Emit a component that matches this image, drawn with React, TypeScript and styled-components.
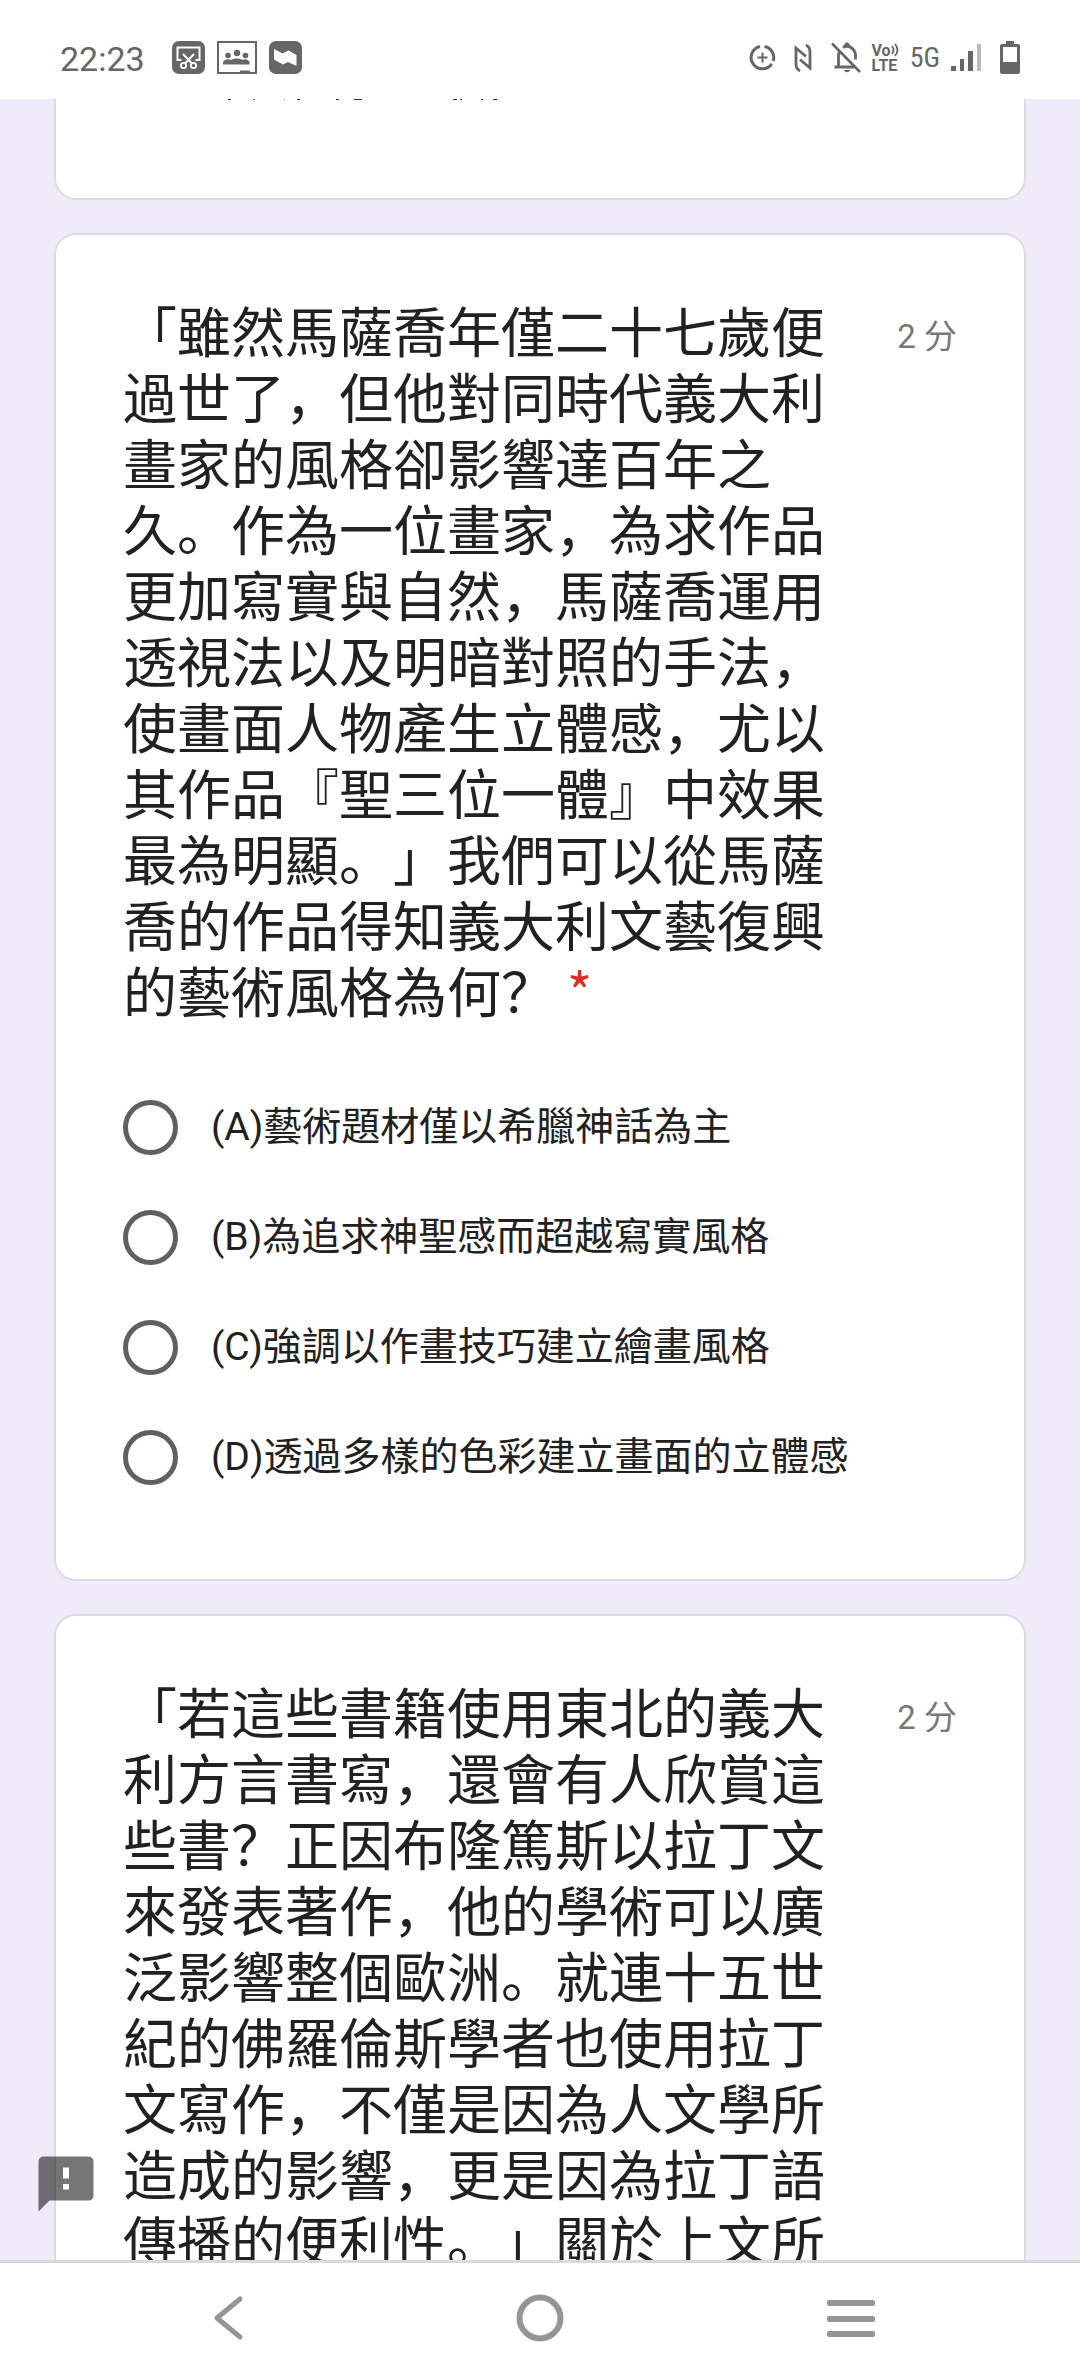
import React from "react";
import styled, { createGlobalStyle } from "styled-components";

const GlobalStyle = createGlobalStyle`
  * { box-sizing: border-box; }
  html, body, #root { height: 100%; }
  body {
    margin: 0;
    background: #f0ebf8;
    color: #212121;
    font-family: Roboto, "Noto Sans CJK SC", sans-serif;
    text-spacing-trim: space-all;
  }
`;

const Screen = styled.div`
  display: flex;
  flex-direction: column;
  height: 100vh;
  overflow: hidden;
`;

const StatusBar = styled.header`
  flex: none;
  display: flex;
  align-items: center;
  height: 99px;
  padding: 16px 60px 0;
  background: #fff;
  color: #666;
`;

const Clock = styled.time`
  margin-right: 27px;
  padding-top: 2px;
  font-size: 34px;
  line-height: 40px;
`;

const IconGroup = styled.div<{ $gap: number; $end?: boolean }>`
  display: flex;
  align-items: center;
  gap: ${(p) => p.$gap}px;
  margin-left: ${(p) => (p.$end ? "auto" : "0")};
`;

const Network = styled.span`
  font-family: "Roboto Condensed", Roboto, sans-serif;
  font-size: 28px;
  line-height: 34px;
`;

const Viewport = styled.main`
  flex: 1;
  min-height: 0;
  overflow: hidden;
  display: flex;
  flex-direction: column;
  gap: 33px;
  padding: 0 54px;
  background: #f0ebf8;
`;

const Card = styled.section`
  flex: none;
  padding: 64px 67px 67px;
  background: #fff;
  border: 2px solid #dadce0;
  border-radius: 22px;
`;

const ScrolledCard = styled(Card)`
  height: 101px;
  padding-top: 0;
  border-top: 0;
  border-top-left-radius: 0;
  border-top-right-radius: 0;
  svg { display: block; }
`;

const Heading = styled.div`
  display: flex;
  justify-content: space-between;
  margin-bottom: 44px;
`;

const Question = styled.h2`
  flex: 1;
  max-width: 720px;
  margin: 0;
  padding-top: 3px;
  font-size: 54px;
  font-weight: 400;
  line-height: 66px;
`;

const Required = styled.span`
  padding-left: 12px;
  color: #d93025;
  font-family: "Noto Sans CJK SC", sans-serif;
  line-height: 1;
`;

const Points = styled.span`
  flex: none;
  padding-top: 16px;
  color: #777;
  font-size: 33px;
  line-height: 44px;
`;

const Options = styled.div`
  display: flex;
  flex-direction: column;
`;

const Option = styled.label`
  display: flex;
  align-items: center;
  gap: 33px;
  min-height: 110px;
  font-size: 39px;
  line-height: 55px;
`;

const Radio = styled.input`
  appearance: none;
  flex: none;
  width: 55px;
  height: 55px;
  margin: 0;
  border: 5px solid #5f6065;
  border-radius: 50%;
  background: #fff;
  &:checked { border-width: 16px; }
`;

const Report = styled.button`
  position: fixed;
  left: 33px;
  bottom: 159px;
  width: 66px;
  height: 66px;
  padding: 0;
  border: 0;
  background: none;
  svg { display: block; }
`;

const NavBar = styled.nav`
  flex: none;
  display: grid;
  grid-template-columns: repeat(3, 1fr);
  align-items: center;
  height: 116px;
  padding: 0 74px 3px;
  border-top: 3px solid #dadade;
  background: #fff;
`;

const NavButton = styled.button`
  display: flex;
  justify-content: center;
  padding: 0;
  border: 0;
  background: none;
  color: #959595;
`;

const questions = [
  {
    id: "q1",
    text: "「雖然馬薩喬年僅二十七歲便過世了，但他對同時代義大利畫家的風格卻影響達百年之久。作為一位畫家，為求作品更加寫實與自然，馬薩喬運用透視法以及明暗對照的手法，使畫面人物產生立體感，尤以其作品『聖三位一體』中效果最為明顯。」我們可以從馬薩喬的作品得知義大利文藝復興的藝術風格為何？",
    options: [
      "(A)藝術題材僅以希臘神話為主",
      "(B)為追求神聖感而超越寫實風格",
      "(C)強調以作畫技巧建立繪畫風格",
      "(D)透過多樣的色彩建立畫面的立體感",
    ],
  },
  {
    id: "q2",
    text: "「若這些書籍使用東北的義大利方言書寫，還會有人欣賞這些書？正因布隆篤斯以拉丁文來發表著作，他的學術可以廣泛影響整個歐洲。就連十五世紀的佛羅倫斯學者也使用拉丁文寫作，不僅是因為人文學所造成的影響，更是因為拉丁語傳播的便利性。」關於上文所",
    options: [],
  },
];

// Stroke ends left visible under the status bar by the previous question.
function ScrolledEdge() {
  return (
    <svg width="400" height="2" viewBox="0 0 400 2" fill="#333" aria-hidden="true">
      <rect x="105" width="3" height="1" />
      <rect x="130" width="2" height="1" opacity="0.6" />
      <rect x="161" width="1" height="1" opacity="0.6" />
      <rect x="174" width="3" height="1" />
      <rect x="213" width="3" height="1" />
      <rect x="231" width="8" height="1" />
      <rect x="330" width="4" height="1" />
      <rect x="337" width="2" height="1" />
      <rect x="358" width="2" height="1" />
      <rect x="370" width="4" height="1" />
    </svg>
  );
}

function ScreenshotIcon() {
  return (
    <svg width="33" height="33" viewBox="0 0 33 33" fill="none" aria-hidden="true">
      <rect width="33" height="33" rx="7" fill="#666" />
      <path d="M9.500 19H5.500V6.500H27.500V19H23.500M11 13L20 22.500M22 13L13 22.500" stroke="#fff" strokeWidth="2" />
      <circle cx="11.500" cy="24.500" r="2.600" stroke="#fff" strokeWidth="1.800" />
      <circle cx="21.500" cy="24.500" r="2.600" stroke="#fff" strokeWidth="1.800" />
    </svg>
  );
}

function ClassroomIcon() {
  return (
    <svg width="40" height="33" viewBox="0 0 40 33" aria-hidden="true">
      <rect x="1" y="1" width="38" height="31" fill="none" stroke="#666" strokeWidth="2" />
      <g fill="#666">
        <circle cx="20" cy="12" r="3.200" />
        <circle cx="11" cy="14.500" r="2.800" />
        <circle cx="28.500" cy="14.500" r="2.800" />
        <path d="M6 23.500V21.500C7 18.500 12 17.500 14 19C17 17 23 17 25.500 19C28 17.500 32 18.500 32.500 21.500V23.500Z" />
        <rect x="23" y="29.500" width="10" height="2" />
      </g>
    </svg>
  );
}

function WaveIcon() {
  return (
    <svg width="33" height="33" viewBox="0 0 33 33" aria-hidden="true">
      <rect width="33" height="33" rx="7" fill="#666" />
      <path d="M5 8L13.500 12.500L19.500 9.500L27.500 14V25L19 21L14 23.500L5 18.500Z" fill="#fff" />
    </svg>
  );
}

function DataSaverIcon() {
  return (
    <svg width="27" height="27" viewBox="0 0 27 27" fill="none" stroke="#666" aria-hidden="true">
      <path d="M11 2.500A11.300 11.300 0 1 0 22.800 19.800M24.200 17A11.300 11.300 0 0 0 15.500 2.500" strokeWidth="3" />
      <path d="M13.500 8.500V18.500M8.500 13.500H18.500" strokeWidth="2" />
    </svg>
  );
}

function NfcIcon() {
  return (
    <svg width="33" height="28" viewBox="-7 0 33 28" fill="none" stroke="#666" strokeWidth="2.800" aria-hidden="true">
      <path d="M6 27Q2 25 2 20V4L12 12.500M12 1Q16 3 16 8V24L6 15.500" />
    </svg>
  );
}

function BellOffIcon() {
  return (
    <svg width="30" height="31" viewBox="0 0 30 31" fill="none" stroke="#666" aria-hidden="true">
      <path d="M7.500 25V13.500Q7.500 11 9 8.500M12 5.500Q16 3 20 5.500Q24.500 8.500 24.500 13.500V17.500M3.500 25H23" strokeWidth="2.800" />
      <path d="M13.500 3Q16 -1.500 18.500 3Z" fill="#666" />
      <path d="M12.500 28H19.500Q16 32.500 12.500 28Z" fill="#666" stroke="none" />
      <path d="M1 1.500L29 30" strokeWidth="2.600" />
    </svg>
  );
}

const VolteBox = styled.span`
  display: grid;
  font-size: 16px;
  font-weight: 700;
  line-height: 15px;
`;

const VolteTop = styled.span`
  display: flex;
  align-items: center;
`;

function Volte() {
  return (
    <VolteBox>
      <VolteTop>
        Vo
        <svg width="8" height="14" viewBox="0 0 8 14" fill="none" stroke="#666" strokeWidth="1.800" aria-hidden="true">
          <path d="M1 3Q4 7 1 11M4 1Q9 7 4 13" />
        </svg>
      </VolteTop>
      <span>LTE</span>
    </VolteBox>
  );
}

function SignalIcon() {
  return (
    <svg width="30" height="27" viewBox="0 0 30 27" fill="#666" aria-hidden="true">
      <rect x="0" y="22" width="5" height="5" />
      <rect x="9" y="15" width="4" height="12" />
      <rect x="17" y="7" width="5" height="20" />
      <rect x="26" y="0" width="4" height="27" fill="#bbb" />
    </svg>
  );
}

function BatteryIcon() {
  return (
    <svg width="28" height="33" viewBox="-8 0 28 33" aria-hidden="true">
      <path d="M6 0H14V3H18Q20 3 20 5V31Q20 33 18 33H2Q0 33 0 31V5Q0 3 2 3H6Z" fill="#666" />
      <rect x="3" y="6" width="14" height="15" fill="#fff" />
    </svg>
  );
}

export default function App() {
  return (
    <Screen>
      <GlobalStyle />
      <StatusBar>
        <Clock>22:23</Clock>
        <IconGroup $gap={12}>
          <ScreenshotIcon />
          <ClassroomIcon />
          <WaveIcon />
        </IconGroup>
        <IconGroup $gap={11} $end>
          <DataSaverIcon />
          <NfcIcon />
          <BellOffIcon />
          <Volte />
          <Network>5G</Network>
          <SignalIcon />
          <BatteryIcon />
        </IconGroup>
      </StatusBar>
      <Viewport>
        <ScrolledCard>
          <ScrolledEdge />
        </ScrolledCard>
        {questions.map((q) => (
          <Card key={q.id} aria-labelledby={q.id}>
            <Heading>
              <Question id={q.id}>
                {q.text}
                {q.options.length > 0 && <Required>*</Required>}
              </Question>
              <Points>2 分</Points>
            </Heading>
            {q.options.length > 0 && (
              <Options role="radiogroup" aria-labelledby={q.id}>
                {q.options.map((o) => (
                  <Option key={o}>
                    <Radio type="radio" name={q.id} />
                    {o}
                  </Option>
                ))}
              </Options>
            )}
          </Card>
        ))}
      </Viewport>
      <Report aria-label="回報問題">
        <svg width="66" height="66" viewBox="0 0 66 66" aria-hidden="true">
          <path d="M11 5.500H55Q60.500 5.500 60.500 11V44Q60.500 49.500 55 49.500H16.500L5.500 60.500V11Q5.500 5.500 11 5.500ZM30 16.500V27.500H36V16.500ZM30 33V38.500H36V33Z" fill="#000" fillOpacity="0.540" fillRule="evenodd" />
        </svg>
      </Report>
      <NavBar>
        <NavButton aria-label="返回">
          <svg width="48" height="48" viewBox="0 0 48 48" fill="none" stroke="currentColor" strokeWidth="5" strokeLinecap="round" strokeLinejoin="round" aria-hidden="true">
            <path d="M35 5L12 24L35 43" />
          </svg>
        </NavButton>
        <NavButton aria-label="主畫面">
          <svg width="48" height="48" viewBox="0 0 48 48" fill="none" stroke="currentColor" strokeWidth="6" aria-hidden="true">
            <circle cx="24" cy="24" r="20.500" />
          </svg>
        </NavButton>
        <NavButton aria-label="最近使用">
          <svg width="48" height="48" viewBox="0 0 48 48" fill="currentColor" aria-hidden="true">
            <rect y="6" width="48" height="6" rx="2" />
            <rect y="22" width="48" height="6" rx="2" />
            <rect y="37" width="48" height="6" rx="2" />
          </svg>
        </NavButton>
      </NavBar>
    </Screen>
  );
}
